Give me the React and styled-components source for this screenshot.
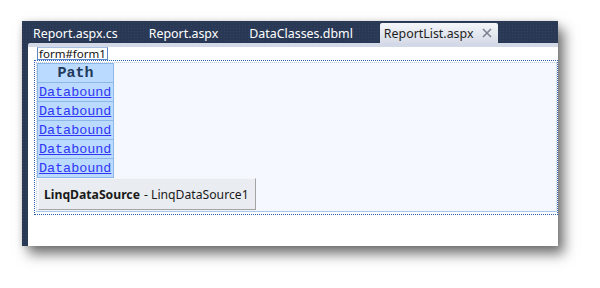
import React from 'react';
import styled, { createGlobalStyle } from 'styled-components';

const GlobalStyle = createGlobalStyle`
    html, body {
        margin: 0;
        padding: 0;
        background: #ffffff;
    }
    body {
        width: 600px;
        height: 288px;
        overflow: hidden;
    }
`

const Page = styled.div`
    padding: 21px 0 0 22px;
`

const Window = styled.div`
    width: 536px;
    height: 225px;
    display: flex;
    flex-direction: column;
    background-color: #293955;
    background-image: radial-gradient(rgba(255, 255, 255, 0.05) 1px, transparent 1px);
    background-size: 3px 3px;
    box-shadow: 6px 8px 12px rgba(0, 0, 0, 0.55), 0 0 6px rgba(0, 0, 0, 0.12);
`

const TabStrip = styled.div`
    height: 22px;
    display: flex;
    align-items: flex-end;
    gap: 23px;
    padding-left: 7px;
    font-family: "Noto Sans", "Open Sans", sans-serif;
    font-size: 12.4px;
`

const Tab = styled.div`
    height: 20px;
    display: flex;
    align-items: center;
    gap: 9px;
    padding: ${p => (p.$active ? '0 6px 0 4px' : '0 4px')};
    color: ${p => (p.$active ? '#1e1e1e' : '#ffffff')};
    background: ${p => (p.$active ? 'linear-gradient(#f4f6f9, #d6dbe7)' : 'transparent')};
    border-radius: 2px 2px 0 0;
    white-space: nowrap;
`

const Close = styled.span`
    display: flex;
    align-items: center;
    color: #7a8290;
`

const Body = styled.div`
    flex: 1;
    display: flex;
`

const Gutter = styled.div`
    width: 6px;
`

const Doc = styled.div`
    flex: 1;
    background: #ffffff;
    border-top: 4px solid #d3d9e6;
    border-top-left-radius: 2px;
    padding-left: 6px;
    display: flex;
    flex-direction: column;
`

const Tag = styled.div`
    align-self: flex-start;
    margin-left: 3px;
    height: 11px;
    padding: 0 1px;
    border: 1px solid #5b86c8;
    border-top-color: #a9c0e2;
    background: #ffffff;
    font-family: "Noto Sans", "Open Sans", sans-serif;
    font-size: 11.5px;
    line-height: 12px;
    color: #111111;
`

const FormBox = styled.div`
    border: 1px dotted #2d5fb0;
    padding: 1px 0 2px 1px;
`

const Surface = styled.div`
    background: #f5f9ff;
    border: 1px dotted #c0cbd8;
    border-bottom: 1px solid #a6c8ec;
    height: 148px;
    display: flex;
    flex-direction: column;
    align-items: flex-start;
`

const Grid = styled.table`
    border-collapse: collapse;
    width: 77px;
`

const HeadCell = styled.th`
    height: 16px;
    padding: 2px 0 0;
    background: #bbdaff;
    border: 1px solid #8db8e6;
    color: #1f3a5c;
    font-family: "Liberation Mono", "DejaVu Sans Mono", monospace;
    font-size: 15px;
    font-weight: bold;
    line-height: 16px;
    text-align: center;
`

const Cell = styled.td`
    height: 16px;
    padding: 2px 0 0 1px;
    background: #bbdaff;
    border: 1px solid #8db8e6;
    font-family: "Liberation Mono", "DejaVu Sans Mono", monospace;
    font-size: 13.4px;
    line-height: 16px;
`

const Link = styled.a`
    color: #2f36f5;
    text-decoration: underline;
`

const DataSource = styled.div`
    margin-left: 1px;
    display: flex;
    align-items: center;
    padding-left: 5px;
    box-sizing: border-box;
    width: 218px;
    height: 32px;
    background: #e9ecf0;
    border: 1px solid #f4f5f7;
    border-right-color: #a3a3a3;
    border-bottom-color: #a3a3a3;
    font-family: "Noto Sans", "Open Sans", sans-serif;
    font-size: 12.2px;
    color: #1a1a1a;
    white-space: nowrap;

    b {
        font-weight: bold;
        margin-right: 4px;
    }
`

const tabs = ['Report.aspx.cs', 'Report.aspx', 'DataClasses.dbml'];
const rows = [1, 2, 3, 4, 5];

const App = () => {
    return (
        <Page>
            <GlobalStyle />
            <Window>
                <TabStrip>
                    {tabs.map(t => (
                        <Tab key={t}>{t}</Tab>
                    ))}
                    <Tab $active>
                        ReportList.aspx
                        <Close>
                            <svg width="10" height="10" viewBox="0 0 10 10">
                                <path d="M1 1 L9 9 M9 1 L1 9" stroke="currentColor" strokeWidth="1.6" />
                            </svg>
                        </Close>
                    </Tab>
                </TabStrip>
                <Body>
                    <Gutter />
                    <Doc>
                        <Tag>form#form1</Tag>
                        <FormBox>
                            <Surface>
                                <Grid>
                                    <thead>
                                        <tr><HeadCell>Path</HeadCell></tr>
                                    </thead>
                                    <tbody>
                                        {rows.map(r => (
                                            <tr key={r}>
                                                <Cell><Link href="#">Databound</Link></Cell>
                                            </tr>
                                        ))}
                                    </tbody>
                                </Grid>
                                <DataSource>
                                    <b>LinqDataSource</b> - LinqDataSource1
                                </DataSource>
                            </Surface>
                        </FormBox>
                    </Doc>
                </Body>
            </Window>
        </Page>
    );
}

export default App;
